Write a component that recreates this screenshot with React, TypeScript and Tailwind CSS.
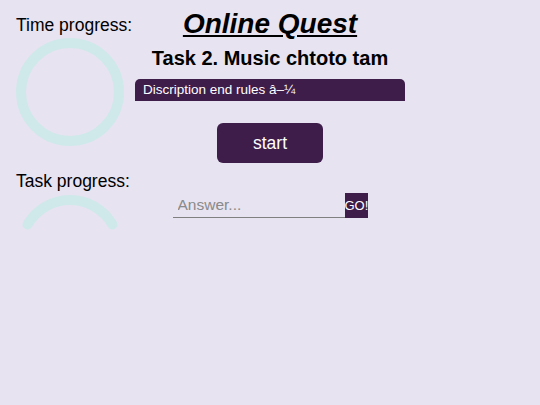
import React from "react";

export default function App() {
  const font = { fontFamily: '"Liberation Sans", Arial, sans-serif' };
  return (
    <div
      className="w-[540px] h-[405px] bg-[#e7e3f0] grid grid-cols-[135px_270px_135px] text-black"
      style={font}
    >
      <div className="pl-[16px] flex flex-col items-start">
        <div className="mt-[15px] text-[17.5px] leading-[20px] whitespace-nowrap">Time progress:</div>
        <svg className="mt-[3px] block" width="108" height="108" viewBox="0 0 108 108">
          <circle cx="54" cy="54" r="49" fill="none" stroke="#cfe9ea" strokeWidth="10" />
        </svg>
        <div className="mt-[25px] text-[17.5px] leading-[20px] whitespace-nowrap">Task progress:</div>
        <svg className="mt-[4px] block" width="108" height="40" viewBox="0 0 108 40">
          <path
            d="M 11.56 29.5 A 49 49 0 0 1 96.44 29.5"
            fill="none"
            stroke="#cfe9ea"
            strokeWidth="10"
            strokeLinecap="round"
          />
        </svg>
      </div>
      <div className="flex flex-col items-center">
        <h1 className="mt-[8px] text-[28px] leading-[32px] font-bold italic underline whitespace-nowrap">
          Online Quest
        </h1>
        <h2 className="mt-[6px] text-[20px] leading-[24px] font-bold whitespace-nowrap">
          Task 2. Music chtoto tam
        </h2>
        <div className="mt-[9px] w-full h-[22px] bg-[#3e1d4b] rounded-t-[5px] pl-[8px] text-white text-[13.5px] leading-[22px] whitespace-nowrap">
          Discription end rules â–¼
        </div>
        <button className="mt-[22px] w-[106px] h-[40px] bg-[#3e1d4b] rounded-[6px] text-white text-[17.5px] leading-[20px]">
          start
        </button>
        <div className="mt-[30px] flex items-stretch h-[25px]">
          <input
            className="w-[172px] h-[25px] bg-transparent border-b border-[#808080] pl-[5px] text-[15.5px] outline-none placeholder:text-[#8a8a8a]"
            placeholder="Answer..."
            style={font}
          />
          <button className="w-[23px] h-[25px] bg-[#3e1d4b] text-white text-[13px] leading-[25px] p-0 whitespace-nowrap overflow-hidden">
            GO!
          </button>
        </div>
      </div>
      <div />
    </div>
  );
}
